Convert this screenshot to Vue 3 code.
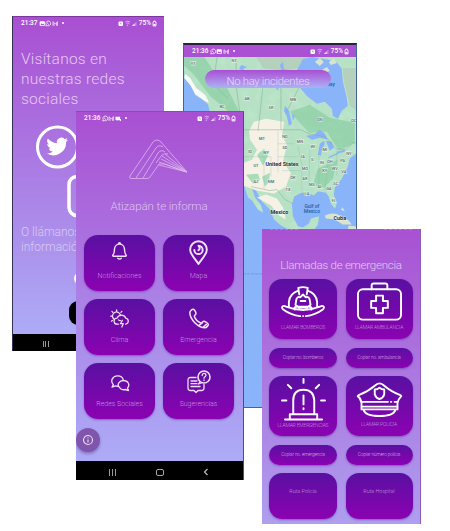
<script setup>
const mapLabels = [
  [193, 64, 'YT'], [234, 61, 'NT'], [247, 99, 'AB'], [271, 108, 'SK'], [293, 100, 'MB'], [222, 107, 'BC'], [320, 120, 'ON'], [354, 121, 'QC'],
  [262, 139, 'MT'], [285, 137, 'ND'], [285, 148, 'SD'], [300, 142, 'MN'], [250, 152, 'ID'], [266, 153, 'WY'], [256, 166, 'UT'],
  [256, 182, 'AZ'], [271, 182, 'NM'], [288, 190, 'TX'], [293, 178, 'OK'], [305, 169, 'MO'], [303, 157, 'IA'], [313, 147, 'WI'],
  [325, 150, 'MI'], [313, 160, 'IL'], [322, 163, 'IN'], [330, 162, 'OH'], [343, 161, 'PA'], [349, 154, 'NY'], [335, 169, 'WV'],
  [344, 172, 'VA'], [325, 171, 'KY'], [305, 179, 'AR'], [312, 185, 'MS'], [320, 187, 'AL'], [329, 189, 'GA'], [336, 184, 'SC'], [307, 194, 'LA'], [334, 201, 'FL']
]
const menu = [
  ['bell', 'Notificaciones'], ['pin', 'Mapa'], ['weather', 'Clima'],
  ['phone', 'Emergencia'], ['chats', 'Redes Sociales'], ['suggest', 'Sugerencias']
]
const calls = [
  { icon: 'helmet', text: 'LLAMAR BOMBEROS', kind: 'call' },
  { icon: 'kit', text: 'LLAMAR AMBULANCIA', kind: 'call' },
  { text: 'Copiar no. bomberos', kind: 'copy' },
  { text: 'Copiar no. ambulancia', kind: 'copy' },
  { icon: 'siren', text: 'LLAMAR EMERGENCIAS', kind: 'call' },
  { icon: 'cap', text: 'LLAMAR POLICIA', kind: 'call' },
  { text: 'Copiar no. emergencia', kind: 'copy' },
  { text: 'Copiar número policia', kind: 'copy' },
  { text: 'Ruta Policia', kind: 'route' },
  { text: 'Ruta Hospital', kind: 'route' }
]
</script>

<template>
  <main class="board">
    <svg class="defs">
      <symbol id="wa" viewBox="0 0 7 7"><path d="M.8 6.200l.5-1.500a2.600 2.600 0 1 1 1 1zM2.500 2.400c0 1.200 1 2.100 2 2.200" fill="none" stroke="#fff" stroke-width=".8" /></symbol>
      <symbol id="pic" viewBox="0 0 7 7"><rect x=".7" y="1" width="5.600" height="5" rx="1" fill="#fff" /><path d="M1.600 5l1.300-1.700 1 1 .7-.7L5.700 5z" fill="#a951d3" /></symbol>
      <symbol id="mail" viewBox="0 0 7 7"><path d="M1 6V1.500l2.500 2.300L6 1.500V6M2.200 3v3M4.800 3v3" fill="none" stroke="#fff" stroke-width=".7" /></symbol>
      <symbol id="chat" viewBox="0 0 7 7"><path d="M.5 1.500h5v2.500h1v2.500L5 5.500H2.500L1.500 6V5H.5z" fill="#fff" /></symbol>
      <symbol id="signals" viewBox="0 0 20 7">
        <rect x=".5" y="1.500" width="4.500" height="4.500" rx="1" fill="#fff" /><path d="M2.700 2.500v1.500h1" stroke="#a951d3" stroke-width=".6" fill="none" />
        <path d="M7.500 2q2-1.500 4.500 0M8.500 3.500q1.400-1 2.700 0M9 6l.8-1.500" stroke="#e6c8f3" stroke-width=".8" fill="none" />
        <path d="M14 6L18.500 1.500V6z" fill="#d5a5e9" opacity=".65" /><path d="M14 6L16.500 3.500V6z" fill="#f4e2fa" />
      </symbol>
      <symbol id="battery" viewBox="0 0 5 7"><path d="M1 2h.8V1h1.400v1H4v4H1z" fill="none" stroke="#fff" stroke-width=".8" /><path d="M1.500 4h2v1.500h-2z" fill="#fff" /></symbol>

      <symbol id="bell" viewBox="0 0 24 24"><path d="M4.500 16.500c2-2 1.500-4 1.800-7C6.600 6.500 9 4 12 4s5.400 2.500 5.700 5.500c.3 3-.2 5 1.800 7 .7.800.2 1.500-.8 1.500H5.300c-1 0-1.500-.7-.8-1.500zM11 4V3q1-1 2 0v1M10 20.200q2 2 4 0" /></symbol>
      <symbol id="pin" viewBox="0 0 24 24"><path d="M12 22.500C8.500 17.500 4 13 4 8.800a8 8 0 0 1 16 0c0 4.200-4.500 8.700-8 13.700zM8 9a4 4 0 1 0 4-4c1.500 1.500 1.500 3.500 0 4.300" stroke-width="1.900" /></symbol>
      <symbol id="weather" viewBox="0 0 20 20"><path d="M4 10.500A4.200 4.200 0 1 1 11 7M7 2V.8M3 3.500L2 2.500M11.500 3.500l1-1M2 7.500H.8M2.500 12l-1 .8M9 16H7.500a3.200 3.200 0 0 1 0-6.400M7.500 9.600A4.800 4.800 0 0 1 16.500 9.500a3.300 3.300 0 0 1 0 6.500M9 11.500q.8 1 2 .8M13 12l-2 3.500h3L12.500 19" /></symbol>
      <symbol id="phone" viewBox="0 0 24 24"><path d="M2 5.500c0-1.500 2.500-4 4-3.500 1.300.4 2.700 3.500 2.700 4.500 0 1.500-2.200 2-1.700 3.300 1 3 4 6 7 7 1.300.5 1.800-1.700 3.300-1.700 1 0 4.500 1.800 4.800 3 .4 1.500-2 3.900-3.600 3.900C11 22 2 13 2 5.500zM12 19.500l3.500-2.700M17 21l3-2.500" stroke-width="1.700" /></symbol>
      <symbol id="chats" viewBox="0 0 24 24"><path d="M4 14l-1.500 3 4-1.500c1 .4 2 .5 3 .4M4 14C-.5 8.500 4 3.500 9 3.500c3.500 0 6.500 2 7 5M11.500 17.500c-4-4 0-8.500 4.500-8.500 5.500 0 8.500 5 5 9l1.200 3-4-1.200c-2.500.8-5.200-.2-6.700-2.300z" /></symbol>
      <symbol id="suggest" viewBox="0 0 24 24"><circle cx="17" cy="7.500" r="6" /><path d="M9 8H3.500Q1 8 1 10.500v8Q1 21 3.500 21H7l2 2 2-2h3.500q2.500 0 2.500-2.500V15M13 12l-1.500 2.500 4-1.500M4 11.500h6M4 14.200h6M4 17h9M15.200 6c0-3 3.800-2.600 3.800-.3 0 1.500-2 1.500-2 3M17 10.500v.5" stroke-width="1.300" /></symbol>

      <symbol id="helmet" viewBox="0 0 48 34"><path d="M9 22V17A15 14 0 0 1 19 5M29 5a15 14 0 0 1 10 12v5M20 9L19 2q5-1.500 10 0l-1 7M16 20l1-6q1-3 4-2l3-3 3 3q3-1 4 2l1 6-4 3h-8zM21.500 16h5M15 25q-1-3 3-3h12q4 0 3 3M21 32q-10-1-18-7c-3-3 0-5 3-3q18 7 36 0c3-2 6 0 3 3q-8 6-18 7M24 32h.2" /></symbol>
      <symbol id="kit" viewBox="0 0 48 40"><rect x="2" y="7" width="44" height="31" rx="5" /><path d="M16 7V3q0-2 2-2h12q2 0 2 2v4M20.500 13.500h7v5.500h5v7h-5v5.500h-7V26h-5v-7h5z" /></symbol>
      <symbol id="siren" viewBox="0 0 46 44"><path d="M12.500 37V23Q12.500 12 23 12t11 11v14M9 37h28v5M9 37v5M4 42.500h38M23 18v9M23 31v1M23 1v4M7 7l3.500 3.500M39 7l-3.500 3.500M1 23h4.500M41 23h4" /></symbol>
      <symbol id="cap" viewBox="0 0 48 38"><path d="M5 23q-1-5-4-7l1-1Q12 11 19 5q5-5 10 0 7 6 17 10l1 1q-3 3-4 7M5 22h28M36 22h.5M40 22h3M5 22v8h38v-8M5 27h38M7 30q2 7 17 7t17-7M19 9q3 0 5-2 2 2 5 2v5q-1 4-5 5-4-1-5-5z" /></symbol>
    </svg>

    <section class="phone social">
      <header class="status"><b>21:37</b><svg><use href="#pic" /></svg><svg><use href="#wa" /></svg><svg><use href="#mail" /></svg><i class="dot"></i><span class="grow"></span><svg class="signals"><use href="#signals" /></svg><b>75%</b><svg class="battery"><use href="#battery" /></svg></header>
      <h1>Visítanos en<br>nuestras redes<br>sociales</h1>
      <svg class="networks" viewBox="0 0 152 96">
        <circle cx="45.500" cy="22" r="20" fill="none" stroke="#fff" stroke-width="3" />
        <path transform="translate(34.500 10.500) scale(.91)" fill="#fff" d="M23.600 4.600c-.8.400-1.800.7-2.800.8 1-.6 1.800-1.600 2.100-2.700-.9.600-2 1-3.100 1.200a4.900 4.900 0 0 0-8.300 4.500C7.500 8.200 3.900 6.300 1.500 3.300A4.900 4.900 0 0 0 3 9.800a5 5 0 0 1-2.200-.6c0 2.300 1.600 4.400 3.900 4.900-.7.200-1.500.2-2.200.1.600 1.900 2.400 3.300 4.600 3.400A10 10 0 0 1 0 19.600 14 14 0 0 0 21.500 7.100c1-.7 1.600-1.600 2.100-2.500z" />
        <rect x="57" y="51.500" width="39" height="39" rx="8" fill="none" stroke="#fff" stroke-width="3.500" />
      </svg>
      <p>O llámanos para<br>información</p>
      <div class="call-row"><span class="call-dot"></span><span class="call-pill"></span></div>
      <nav class="nav"><span class="recent"></span></nav>
    </section>

    <section class="phone map">
      <header class="status"><b>21:36</b><svg><use href="#wa" /></svg><svg><use href="#pic" /></svg><svg><use href="#mail" /></svg><i class="dot"></i><span class="grow"></span><svg class="signals"><use href="#signals" /></svg><b>75%</b><svg class="battery"><use href="#battery" /></svg></header>
      <svg class="chart" viewBox="184 56 172 351">
        <defs>
          <filter id="terrain" x="0" y="0" width="1" height="1">
            <feTurbulence type="fractalNoise" baseFrequency=".09" numOctaves="3" seed="8" />
            <feColorMatrix values="0 0 0 0 .5  0 0 0 0 .79  0 0 0 0 .6  5 0 0 0 -2.500" />
            <feComposite in2="SourceGraphic" operator="in" />
          </filter>
          <path id="land" d="M184 56H357V152L350 158 348 166 345 172 342 178 335 187 334 194 337 203 335 208 331 203 329 196 326 192 318 191 314 195 309 193 302 192 294 196 292 204 293 216 298 226 303 227 309 223 311 218 319 216 318 224 313 231H292L281 225 274 219 270 209 262 201 256 190 252 188 255 197 261 205 263 212 258 209 252 200 248 197 244 185V115L210 113 208 104 202 98 195 94 191 85 184 76z" />
        </defs>
        <path fill="#8ab4fa" d="M184 56h173v352H184z" />
        <use href="#land" fill="#b6e1c4" />
        <use href="#land" filter="url(#terrain)" opacity=".8" />
        <path fill="#87cda2" opacity=".65" d="M184 56h20l8 12 14 17 10 20 9 15-15-8-20-17-17-22-9-8zM290 111l20-7 20 13 25 5v20l-16 8-12-19-18 1zM318 168l20-9-5 19-9 9-11-3z" />
        <path fill="#f5f1e5" d="M249 130l5-9 12-3 18 3-2 14 5 9-4 17 8 11-5 14-12 7-17-3-13-5V162l8-3 5-10-7-10zM257 197l9-3 11 4 6 9 3 12-7-4-8-10-9-5z" />
        <path fill="#a9dcb8" d="M257 154l7-6 4 7-5 10zM246 174l12-1 2 6-7 4zM262 176l8-4-1 9-4 5z" />
        <path fill="#b5d1bd" d="M256 56h58l-11 10-20 4-20-3zM343 67h14v43l-7-5-6-25z" />
        <path fill="#f8faf8" d="M185 73l5 4 6 10 9 7 4 8-5-2-9-7-5-9-6-7z" />
        <path fill="#8ab4fa" d="M303 58l9-2 24 4 6 8 1 12 4 17 1 8-6 5-4 8-5-3-1-7-7-7-8 2-10-8-10-12-4-6 5-10zM280 64l3-3 1 7 4 1-2 5-4-3zM241 64l6 2-4 2 3 3-7-3zM285 105l4 5 3 13-3 2-2-9-3-6zM292 113l3 2-2 5zM253 78l10-3-5 5zM274 83l5 5-2 1zM306 135l8-1 6-5 5 4 3 6-8-2-8 2zM318 154l2-11 4-3 1 3-3 6-1 6zM326 140l6 1 2 6-4 3-2-5zM329 156l9-4 1 1-9 4zM337 151l8-2v2l-8 2z" />
        <path fill="#d7e5cd" d="M315 61l5-4 4 4-4 4zM329 61l5-4 3 5-6 2zM322 69l5-3 3 4-7 2zM325 215q9-4 15 0l9 5 3 4-9 0-8-5-9-1zM349 225l8 1v3h-9zM341 209l2-2 2 4z" />
        <g fill="none" stroke="#83a994" stroke-width=".5">
          <path d="M217 56l-4 27 15 15M236 56v29h64M236 85l5 35M263 85l-5 45M281 85v44M300 85l-14 27M244 129h57l8 4 17 3 10 12 10 1 7-7 4 0M251 186l19 4 7-1 8 10 8 4" />
          <path d="M278 130v42M278 143h16M278 156h19M244 156h27v20M264 156v32M282 170h20v20M298 145l5 24M310 150l-1 37M319 153v32M329 155l-4 35M337 149v26" opacity=".5" />
        </g>
        <path d="M183 273.500H263" stroke="#6f91d0" stroke-width=".8" stroke-dasharray="3 1" />
        <g class="states"><text v-for="l in mapLabels" :key="l[2]" :x="l[0]" :y="l[1]">{{ l[2] }}</text></g>
        <g class="places"><text x="282" y="165">United States</text><text x="279.500" y="213">Mexico</text><text x="340" y="219.500">Cuba</text><text class="sea" x="312" y="207">Gulf of</text><text class="sea" x="312" y="212.500">Mexico</text><text class="sea" x="331" y="85">Bay</text></g>
      </svg>
      <div class="toast"><span>No hay incidentes</span></div>
    </section>

    <section class="phone home">
      <header class="status"><b>21:36</b><svg><use href="#wa" /></svg><svg><use href="#mail" /></svg><svg><use href="#chat" /></svg><i class="dot"></i><span class="grow"></span><svg class="signals"><use href="#signals" /></svg><b>75%</b><svg class="battery"><use href="#battery" /></svg></header>
      <svg class="logo" viewBox="0 0 60 42"><path d="M1 37L24 3q4-4 8 0l26 30-4-1L36 25h-6L21 38q-1 1.500-3 1.500H2q-2 0-1-2.500M7 39L27 9q3-4 7-1M14 39L29 14q3-4 7-1M27 24L33 16q2-2 6-1M36 15l22 18M33 17l25 16M32 20l26 13M30 23l28 10M30 26l28 7" /></svg>
      <h2>Atizapán te informa</h2>
      <div class="menu"><button v-for="m in menu" :key="m[0]"><svg :class="['glyph', m[0]]"><use :href="'#' + m[0]" /></svg><span>{{ m[1] }}</span></button></div>
      <span class="info"><svg viewBox="0 0 12 12"><circle cx="6" cy="6" r="4.500" /><path d="M6 5.500v3M6 3.300v1" /></svg></span>
      <nav class="nav"><span class="recent"></span><span class="home-key"></span><svg class="back" viewBox="0 0 6 8"><path d="M4.500 1L1.500 4l3 3" /></svg></nav>
    </section>

    <section class="phone emergency">
      <div class="clipped"><i></i><i></i></div>
      <h2>Llamadas de emergencia</h2>
      <div class="calls"><button v-for="c in calls" :key="c.text" :class="c.kind"><svg v-if="c.icon" :class="['art', c.icon]"><use :href="'#' + c.icon" /></svg><span>{{ c.text }}</span></button></div>
    </section>
  </main>
</template>

<style>
body { margin: 0; background: #fff; }
</style>

<style scoped>
* { box-sizing: border-box; }
.board { position: relative; width: 450px; height: 531px; overflow: hidden; font-family: Roboto, "Liberation Sans", sans-serif; background: #fff; }
.defs { position: absolute; width: 0; height: 0; }
.phone { position: absolute; overflow: hidden; display: flex; flex-direction: column; background: linear-gradient(#a94fd2, #adacf7 95%); }
.social { left: 12px; top: 16px; width: 152px; height: 335px; border-left: 1px solid #353154; border-top: 1px solid #7e369f; }
.map { left: 183px; top: 43px; width: 174px; height: 365px; background: #8ab4fa; border: 1px solid #416594; border-top: 2px solid #292337; }
.home { left: 76px; top: 111px; width: 168px; height: 369px; border-right: 1px solid #64408a; border-top: 1px solid #9444b9; }
.emergency { left: 262px; top: 229px; width: 159px; height: 295px; border-right: 1px solid #8e5bb7; background: linear-gradient(#a951d2, #ae9fef); }
.status { display: flex; align-items: center; flex: none; height: 12px; padding: 0 7px 0 8px; color: #fff; font-size: 6.500px; }
.status b { font-weight: 500; margin-right: 1px; }
.status svg { width: 6.500px; height: 7px; flex: none; }
.status .signals { width: 20px; height: 7px; margin-right: 1px; }
.status .battery { width: 5px; height: 7px; }
.dot { width: 2px; height: 2px; border-radius: 50%; background: #fff; margin-left: 4px; }
.grow { flex: 1; }
h1, h2, p { margin: 0; font-weight: 300; color: #e6c8f3; }
h1 { font-size: 15.500px; line-height: 19.800px; padding: 21px 0 0 8px; letter-spacing: .25px; white-space: nowrap; }
.networks { flex: none; width: 152px; height: 96px; margin-top: 16px; margin-left: -1px; }
.social p { font-size: 12px; line-height: 15px; padding: 4px 8px 0; color: #d9caf3; white-space: nowrap; }
.call-row { display: flex; flex-direction: column; padding-left: 56px; gap: 16px; margin-top: 17px; }
.call-dot { width: 20px; height: 13px; border-radius: 8px; background: #fff; margin-left: 5px; }
.call-pill { width: 45px; height: 24px; border-radius: 9px; background: #000; }
.nav { background: #000; margin-top: auto; display: flex; align-items: center; flex: none; }
.social .nav { height: 17px; padding: 3px 0 0 30px; }
.recent { width: 6px; height: 6px; border: solid #999; border-width: 0 1px; background: linear-gradient(90deg, transparent 37%, #999 37% 60%, transparent 60%); }

.map .status { background: #aa50d2; height: 12px; }
.chart { width: 172px; height: 350px; flex: none; }
.states { font-size: 4px; font-weight: 500; fill: #566567; text-anchor: middle; paint-order: stroke; stroke: #e7f5eb; stroke-width: 1px; }
.places { font-size: 5.500px; font-weight: 700; fill: #273137; text-anchor: middle; paint-order: stroke; stroke: #ffffff99; stroke-width: 1px; }
.sea { fill: #225ea8; font-size: 5px; font-weight: 500; stroke: none; }
.toast { position: absolute; left: 21px; top: 25px; width: 126px; height: 18px; border-radius: 10px; overflow: hidden; background: linear-gradient(#a94fd2, #adb0f7); color: #e9d8fa; text-align: center; font-size: 11.300px; letter-spacing: -.3px; line-height: 23px; font-weight: 300; white-space: nowrap; }

.logo { width: 60px; height: 42px; margin: 15px 0 0 53px; flex: none; fill: none; stroke: #dfb6ec; stroke-width: .8; }
.home h2 { text-align: center; font-size: 11.500px; line-height: 16px; margin: 17px 1px 0 0; letter-spacing: -.08px; color: #dfc1ef; }
.menu { display: grid; grid-template-columns: 71px 71px; gap: 8px; padding: 21px 0 0 8px; }
button { border: 0; padding: 0; background: linear-gradient(#5910a2, #8c02b2); color: #bf93d9; font: 300 7px Roboto, sans-serif; box-shadow: 0 1px 2px #50259080; display: flex; flex-direction: column; align-items: center; white-space: nowrap; overflow: hidden; }
.menu button { height: 56px; border-radius: 14px; }
.glyph { width: 21px; height: 22px; margin-top: 5px; fill: none; stroke: #eee0f6; stroke-width: 1.600; stroke-linecap: round; stroke-linejoin: round; }
.glyph.pin, .glyph.suggest { width: 25px; height: 26px; }
.glyph.phone { width: 22px; height: 23px; position: static; background: none; margin-top: 8px; }
.glyph.weather { width: 19px; height: 19px; margin-top: 10px; stroke-width: 1.300; }
.glyph.chats { width: 20px; height: 20px; margin-top: 10px; }
.glyph.suggest { margin-top: 6px; width: 24px; height: 25px; }
.menu span { margin-top: auto; line-height: 10px; padding-bottom: 10px; }
.info { width: 24px; height: 24px; border-radius: 50%; background: #8055ac; display: flex; align-items: center; justify-content: center; margin: 9px 0 0; box-shadow: 0 2px 3px #62499b88; flex: none; }
.info svg { width: 12px; height: 12px; fill: none; stroke: #eadcf3; stroke-width: 1.100; }
.home .nav { height: 19px; padding: 3px 34px 0 33px; justify-content: space-between; }
.home .recent { width: 7px; height: 7px; }
.home-key { width: 8px; height: 7px; border: 1px solid #aaa; border-radius: 2px; }
.back { width: 6px; height: 8px; fill: none; stroke: #bbb; stroke-width: 1.200; }

.clipped { display: flex; justify-content: space-between; height: 1px; padding: 0 8px; flex: none; }
.clipped i { width: 28px; opacity: .4; background: repeating-linear-gradient(90deg, #d8a9e8 0 3px, transparent 3px 5px); }
.emergency h2 { text-align: center; font-size: 11.600px; letter-spacing: -.28px; line-height: 16px; margin-top: 27px; }
.calls { display: grid; grid-template-columns: 68px 67px; grid-template-rows: 60px 20px 60px 20px 46px; gap: 8.500px; padding: 6px 0 0 7px; }
.calls button { border-radius: 13px; }
.call span { font-size: 5px; letter-spacing: -.18px; line-height: 8px; margin-top: auto; padding-bottom: 8px; }
.calls .copy { justify-content: center; border-radius: 10px; font-size: 4.700px; letter-spacing: -.12px; color: #cfafe0; }
.calls .route { font-size: 5.400px; letter-spacing: -.05px; padding-top: 15px; }
.art { width: 46px; height: 32px; margin-top: 7px; fill: none; stroke: #fff; stroke-width: 2; stroke-linecap: round; stroke-linejoin: round; flex: none; }
.art.kit { width: 47px; height: 40px; margin-top: 3px; }
.art.siren { width: 45px; height: 43px; margin-top: 2px; }
.art.siren + span { padding-bottom: 8px; }
.art.cap { width: 47px; height: 36px; margin-top: 5px; }
</style>
